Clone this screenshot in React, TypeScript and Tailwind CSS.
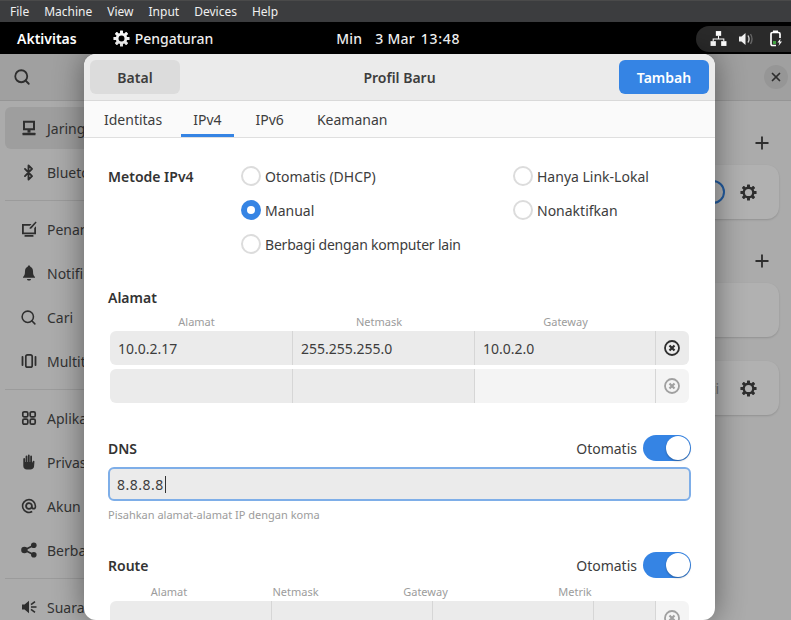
import { Bluetooth, Search, Plus, X } from "lucide-react";
import type { ReactNode } from "react";

const fontStack = "font-['Noto_Sans','Open_Sans',sans-serif]";

/* ─── Small drawn icons ─────────────────────────────────────────────── */
function Gear({ size = 18, color = "#2e2e2e", hole = 3.4, ring = 5 }: { size?: number; color?: string; hole?: number; ring?: number }) {
  return (
    <svg width={size} height={size} viewBox="0 0 16 16">
      {[0, 45, 90, 135].map((a) => (
        <rect key={a} x="6.6" y="0.4" width="2.8" height="15.2" rx="0.5" fill={color} transform={`rotate(${a} 8 8)`} />
      ))}
      <circle cx="8" cy="8" r={ring + 0.6} fill={color} />
      <circle cx="8" cy="8" r={hole} fill="var(--hole)" />
    </svg>
  );
}

function Svg({ children, size = 16 }: { children: ReactNode; size?: number }) {
  return (
    <svg width={size} height={size} viewBox="0 0 16 16" fill="#2e2e2e">
      {children}
    </svg>
  );
}

const sidebarIcons: Record<string, ReactNode> = {
  net: (
    <Svg>
      <path fillRule="evenodd" d="M2 .8h12v9.400H2zM4 2.800v5.400h8V2.800z" />
      <rect x="6.500" y="10" width="3" height="2.600" />
      <rect x="1.500" y="12.800" width="13" height="2.400" rx="0.500" />
    </Svg>
  ),
  bt: <Bluetooth size={17} strokeWidth={2.6} color="#2e2e2e" />,
  display: (
    <Svg>
      <path fillRule="evenodd" d="M1 3h9.500L9 4.800H2.800v6.700h10.400V7L15 5.200V13.300H1z" />
      <path d="M14.600 0.600l1 1-5.200 5.800-1.900.7.600-1.900z" />
      <rect x="3.500" y="14" width="9" height="1.800" rx="0.500" />
    </Svg>
  ),
  bell: (
    <Svg>
      <path d="M8 .6c.8 0 1.200.5 1.300 1.100C11.200 2.300 12 4.200 12 6.300c0 3 .5 4.400 2 5.700v.8H2V12c1.500-1.300 2-2.700 2-5.700 0-2.100.8-4 2.700-4.600C6.800 1.100 7.200.6 8 .6z" />
      <path d="M6 14h4c0 .9-.9 1.600-2 1.600S6 14.900 6 14z" />
    </Svg>
  ),
  search: <Search size={17} strokeWidth={2.2} color="#2e2e2e" />,
  multi: (
    <Svg>
      <rect x="4.800" y="1.800" width="6.400" height="12.400" rx="1.800" fill="none" stroke="#2e2e2e" strokeWidth="1.700" />
      <rect x="0.600" y="3" width="1.800" height="10" rx="0.800" />
      <rect x="13.600" y="3" width="1.800" height="10" rx="0.800" />
    </Svg>
  ),
  apps: (
    <Svg>
      {[
        [1.800, 1.800],
        [9.200, 1.800],
        [1.800, 9.200],
        [9.200, 9.200],
      ].map(([x, y]) => (
        <rect key={`${x}-${y}`} x={x} y={y} width="5" height="5" rx="1.400" fill="none" stroke="#2e2e2e" strokeWidth="1.700" />
      ))}
    </Svg>
  ),
  hand: (
    <Svg>
      <path d="M3.200 4c.5 0 .9.400.9.900V8h.5V2.500c0-.5.400-.9.900-.9s.9.400.9.900V8h.5V1.400c0-.5.400-.9.900-.9s.9.400.9.900V8h.5V2.500c0-.5.400-.9.900-.9s.9.400.9.900V9l.7-1.500c.3-.6.900-.8 1.400-.5.400.2.500.7.300 1.200L13 13c-.6 1.500-1.700 2.500-3.500 2.500H5.800c-2 0-3.500-1.500-3.500-3.500V4.900c0-.5.400-.9.900-.9z" />
    </Svg>
  ),
  at: (
    <Svg>
      <path fillRule="evenodd" d="M8 .8a7.200 7.200 0 1 0 3.600 13.440l-.8-1.380A5.600 5.600 0 1 1 13.600 8v.7c0 .6-.4 1-.9 1s-.9-.4-.9-1V8A3.800 3.800 0 1 0 10.700 10.700c.5.600 1.200.9 2 .9 1.500 0 2.500-1.200 2.500-2.900V8A7.200 7.200 0 0 0 8 .8zm0 5.200a2 2 0 1 1 0 4 2 2 0 0 1 0-4z" />
    </Svg>
  ),
  share: (
    <Svg>
      <circle cx="12.800" cy="3.200" r="2.800" />
      <circle cx="12.800" cy="12.800" r="2.800" />
      <circle cx="3.400" cy="8" r="3.200" />
      <path d="M3.400 8L12.800 3.200M3.400 8l9.400 4.800" stroke="#2e2e2e" strokeWidth="1.800" />
    </Svg>
  ),
  sound: (
    <Svg>
      <path d="M1 5.500h2.600L8 1.800v12.400L3.600 10.500H1z" />
      <path d="M10 8h5.500M10 5.600l4-3M10 10.400l4 3" stroke="#2e2e2e" strokeWidth="1.600" fill="none" />
    </Svg>
  ),
};

function Sep() {
  return <div className="my-[6px] h-px bg-[#9b9b9b]" />;
}

function SideRow({ icon, label, active }: { icon: string; label: string; active?: boolean }) {
  return (
    <div className={`my-px flex h-[42px] items-center rounded-[6px] pl-[15px] ${active ? "bg-[#9e9e9e]" : ""}`}>
      <span className="flex w-[17px] justify-center">{sidebarIcons[icon]}</span>
      <span className="ml-[10px] whitespace-nowrap text-[14px] text-[#333]">{label}</span>
    </div>
  );
}

function Radio({ label, checked, tight }: { label: string; checked?: boolean; tight?: boolean }) {
  return (
    <div className="flex h-[20px] items-center gap-[4px]">
      {checked ? (
        <span className="flex h-[20px] w-[20px] items-center justify-center rounded-full bg-[#3584e4]">
          <span className="h-[8px] w-[8px] rounded-full bg-white" />
        </span>
      ) : (
        <span className="h-[20px] w-[20px] rounded-full border-2 border-[#dcdcdc] bg-white" />
      )}
      <span className={`whitespace-nowrap text-[14px] text-[#3d3d3d] ${tight ? "tracking-[-0.2px]" : ""}`}>{label}</span>
    </div>
  );
}

function Toggle() {
  return (
    <span className="flex h-[26px] w-[48px] items-center justify-end rounded-full bg-[#3584e4] pr-[1px]">
      <span className="h-[24px] w-[24px] rounded-full bg-white shadow-[0_1px_2px_rgba(0,0,0,0.3)]" />
    </span>
  );
}

function RemoveIcon({ faded }: { faded?: boolean }) {
  const c = faded ? "#a0a0a0" : "#2e2e2e";
  return (
    <svg width="16" height="16" viewBox="0 0 16 16" fill="none" stroke={c}>
      <circle cx="8" cy="8" r="7" strokeWidth="1.800" />
      <path d="M5.500 5.500l5 5M10.500 5.500l-5 5" strokeWidth="2.200" />
    </svg>
  );
}

function Cell({ w, value, light, last }: { w: string; value?: string; light?: boolean; last?: boolean }) {
  return (
    <div
      className={`flex items-center pl-[8px] text-[14px] text-[#3d3d3d] ${w} ${light ? "bg-[#f4f4f4]" : "bg-[#ebebeb]"} ${
        last ? "" : "border-r border-[#d6d6d6]"
      }`}
    >
      {value}
    </div>
  );
}

function AddrRow({ values, faded }: { values: string[]; faded?: boolean }) {
  return (
    <div className="flex h-[34px] overflow-hidden rounded-[6px]">
      <Cell w="w-[183px]" value={values[0]} />
      <Cell w="w-[182px]" value={values[1]} />
      <Cell w="w-[181px]" value={values[2]} light={faded} />
      <div className={`flex flex-1 items-center justify-center pr-[1px] ${faded ? "bg-[#f4f4f4]" : "bg-[#ebebeb]"}`}>
        <RemoveIcon faded={faded} />
      </div>
    </div>
  );
}

function SectionHead({ title }: { title: string }) {
  return (
    <div className="flex h-[26px] items-center justify-between">
      <span className="text-[14px] font-semibold text-[#333]">{title}</span>
      <div className="flex items-center gap-[6px]">
        <span className="text-[14px] text-[#3d3d3d]">Otomatis</span>
        <Toggle />
      </div>
    </div>
  );
}

function Dialog() {
  return (
    <div className="absolute left-[84px] top-0 flex h-[566px] w-[631px] flex-col overflow-hidden rounded-[12px] bg-white shadow-[0_0_30px_rgba(0,0,0,0.45)]">
      <div className="flex h-[47px] shrink-0 items-start justify-between border-b border-[#d9d9d9] bg-[#ebebeb] px-[6px] pt-[6px]">
        <span className="flex h-[34px] w-[90px] items-center justify-center rounded-[6px] bg-[#dcdcdc] text-[14px] font-semibold text-[#3d3d3d]">
          Batal
        </span>
        <span className="mt-[7px] text-[14px] font-semibold text-[#3d3d3d]">Profil Baru</span>
        <span className="flex h-[34px] w-[90px] items-center justify-center rounded-[6px] bg-[#3584e4] text-[14px] font-semibold text-white">
          Tambah
        </span>
      </div>

      <div className="flex h-[37px] shrink-0 border-b border-[#dfdfdf] bg-[#fafafa] pl-[8px] text-[14px] text-[#3d3d3d]">
        <span className="flex items-center px-[12px]">Identitas</span>
        <span className="ml-[7px] flex items-center border-b-[3px] border-[#3584e4] px-[12px] pt-[3px]">IPv4</span>
        <span className="ml-[10px] flex items-center px-[12px]">IPv6</span>
        <span className="ml-[9px] flex items-center px-[12px]">Keamanan</span>
      </div>

      <div className="flex-1 px-[24px]">
        <div className="mt-[28px] flex">
          <span className="w-[133px] text-[14px] font-semibold text-[#333]">Metode IPv4</span>
          <div className="flex w-[272px] flex-col gap-[14px]">
            <Radio label="Otomatis (DHCP)" />
            <Radio label="Manual" checked />
            <Radio label="Berbagi dengan komputer lain" tight />
          </div>
          <div className="flex flex-col gap-[14px]">
            <Radio label="Hanya Link-Lokal" />
            <Radio label="Nonaktifkan" />
          </div>
        </div>

        <div className="mt-[34px] text-[14px] font-semibold leading-[20px] text-[#333]">Alamat</div>
        <div className="mt-[6px] flex px-[2px] text-center text-[11px] leading-[16px] text-[#9c9c9c]">
          <span className="w-[173px]">Alamat</span>
          <span className="w-[192px]">Netmask</span>
          <span className="w-[181px]">Gateway</span>
        </div>
        <div className="mt-[1px] flex flex-col gap-[4px] px-[2px]">
          <AddrRow values={["10.0.2.17", "255.255.255.0", "10.0.2.0"]} />
          <AddrRow values={["", "", ""]} faded />
        </div>

        <div className="mt-[32px]">
          <SectionHead title="DNS" />
        </div>
        <div className="mt-[6px] flex h-[34px] items-center rounded-[6px] border-2 border-[#7eaee8] bg-[#ebebeb] pl-[7px] text-[14px] tracking-[0.5px] text-[#3d3d3d]">
          8.8.8.8
          <span className="ml-[1px] h-[17px] w-px bg-[#333]" />
        </div>
        <div className="mt-[6px] text-[11px] leading-[16px] text-[#9c9c9c]">Pisahkan alamat-alamat IP dengan koma</div>

        <div className="mt-[29px]">
          <SectionHead title="Route" />
        </div>
        <div className="mt-[6px] flex px-[2px] text-center text-[11px] leading-[16px] text-[#9c9c9c]">
          <span className="w-[118px]">Alamat</span>
          <span className="w-[135px]">Netmask</span>
          <span className="w-[125px]">Gateway</span>
          <span className="w-[174px]">Metrik</span>
        </div>
        <div className="mx-[2px] mt-[1px] flex h-[34px] overflow-hidden rounded-t-[6px]">
          <Cell w="w-[162px]" />
          <Cell w="w-[161px]" />
          <Cell w="w-[161px]" />
          <Cell w="w-[62px]" />
          <div className="flex flex-1 items-center justify-center bg-[#f4f4f4] pr-[1px]">
            <RemoveIcon faded />
          </div>
        </div>
      </div>
    </div>
  );
}

export default function App() {
  return (
    <div className={`flex h-[620px] w-[791px] flex-col overflow-hidden bg-[#ababab] ${fontStack}`}>
      {/* host window menu */}
      <div className="flex h-[22px] shrink-0 items-center gap-[15px] border-t border-[#4a4a4a] bg-[#3c3d3f] pl-[10px] text-[12px] text-[#f0f0f0]">
        <span>File</span>
        <span>Machine</span>
        <span>View</span>
        <span>Input</span>
        <span>Devices</span>
        <span>Help</span>
      </div>

      {/* gnome top bar */}
      <div className="relative flex h-[32px] shrink-0 items-center bg-black text-[14px] text-white">
        <span className="ml-[17px] font-semibold">Aktivitas</span>
        <span className="ml-[36px] flex items-center gap-[5px] font-medium [--hole:#000]">
          <Gear size={17} color="#fff" hole={2.800} ring={4.800} />
          Pengaturan
        </span>
        <span className="ml-[123px] flex font-medium tracking-[0.2px]">
          <span>Min</span>
          <span className="ml-[13px]">3 Mar</span>
          <span className="ml-[6px] tracking-[0.7px]">13:48</span>
        </span>
        <div className="ml-auto mt-[1px] flex h-[26px] w-[95px] items-center rounded-l-[13px] bg-[#2a2a2a] pl-[14px]">
          <svg width="17" height="17" viewBox="0 0 16 16" fill="#fff">
            <rect x="5.500" y="1" width="5" height="4.500" />
            <rect x="0.500" y="10.500" width="5" height="4.500" />
            <rect x="10.500" y="10.500" width="5" height="4.500" />
            <path d="M7.500 5.500h1V8h5v2.500h-1V9h-9v1.500h-1V8h5z" />
          </svg>
          <svg className="ml-[11px]" width="16" height="16" viewBox="0 0 16 16" fill="#f0f0f0">
            <path d="M1 5.500h2.500L7.500 2v12l-4-3.500H1z" />
            <path d="M10 4.500c1.200 2 1.200 5 0 7" stroke="#ccc" strokeWidth="1.400" fill="none" />
            <path d="M12.500 3c1.800 3 1.800 7 0 10" stroke="#666" strokeWidth="1.400" fill="none" />
          </svg>
          <svg className="ml-[14px]" width="16" height="17" viewBox="0 0 16 17" fill="none">
            <rect x="5" y="0.500" width="5" height="2" fill="#fff" />
            <path d="M8 15.500H4.500a1.500 1.500 0 0 1-1.500-1.500V4a1.500 1.500 0 0 1 1.500-1.500h6A1.500 1.500 0 0 1 12 4v4" stroke="#fff" strokeWidth="1.700" />
            <rect x="5" y="11" width="3" height="3" fill="#3fa33f" />
            <path d="M12.500 8.500l-3 4h2l-1 3.500 3.500-4.500h-2z" fill="#fff" />
          </svg>
        </div>
      </div>

      {/* settings window, dimmed behind the dialog */}
      <div className="relative min-h-0 flex-1">
        <div className="flex h-[47px] items-center justify-between border-b border-[#959595] bg-[#a0a0a0] pl-[13px] pr-[3px]">
          <Search size={18} strokeWidth={2.400} color="#2e2e2e" />
          <span className="flex h-[24px] w-[24px] items-center justify-center rounded-full bg-[#969696]">
            <X size={14} strokeWidth={3} color="#2e2e2e" />
          </span>
        </div>

        <div className="flex">
          <div className="w-[84px] shrink-0 overflow-hidden pl-[5px] pt-[5px]">
            <div className="flex w-[200px] flex-col">
              <SideRow icon="net" label="Jaringan" active />
              <SideRow icon="bt" label="Bluetooth" />
              <Sep />
              <SideRow icon="display" label="Penampilan" />
              <SideRow icon="bell" label="Notifikasi" />
              <SideRow icon="search" label="Cari" />
              <SideRow icon="multi" label="Multitasking" />
              <Sep />
              <SideRow icon="apps" label="Aplikasi" />
              <SideRow icon="hand" label="Privasi" />
              <SideRow icon="at" label="Akun Daring" />
              <SideRow icon="share" label="Berbagi" />
              <Sep />
              <SideRow icon="sound" label="Suara" />
            </div>
          </div>

          <div className="flex flex-1 flex-col items-end pr-[12px] pt-[30px]">
            <span className="mr-[7px] flex h-[24px] items-center">
              <Plus size={20} strokeWidth={2.200} color="#2e2e2e" />
            </span>
            <div className="relative mt-[10px] flex h-[54px] w-[200px] items-center justify-end rounded-[12px] bg-[#b1b1b1] pr-[22px] shadow-[0_1px_2px_rgba(0,0,0,0.15)] [--hole:#b1b1b1]">
              <span className="absolute right-[54px] h-[24px] w-[48px] rounded-full border-2 border-[#225b9f]" />
              <Gear size={17} color="#2e2e2e" />
            </div>
            <span className="mr-[7px] mt-[30px] flex h-[24px] items-center">
              <Plus size={20} strokeWidth={2.200} color="#2e2e2e" />
            </span>
            <div className="mt-[10px] h-[54px] w-[200px] rounded-[12px] bg-[#b1b1b1] shadow-[0_1px_2px_rgba(0,0,0,0.15)]" />
            <div className="mt-[24px] flex h-[54px] w-[200px] items-center justify-end gap-[21px] rounded-[12px] bg-[#b1b1b1] pr-[22px] shadow-[0_1px_2px_rgba(0,0,0,0.15)] [--hole:#b1b1b1]">
              <span className="text-[14px] text-[#6f6f6f]">Mati</span>
              <Gear size={17} color="#2e2e2e" />
            </div>
          </div>
        </div>

        <Dialog />
      </div>
    </div>
  );
}
